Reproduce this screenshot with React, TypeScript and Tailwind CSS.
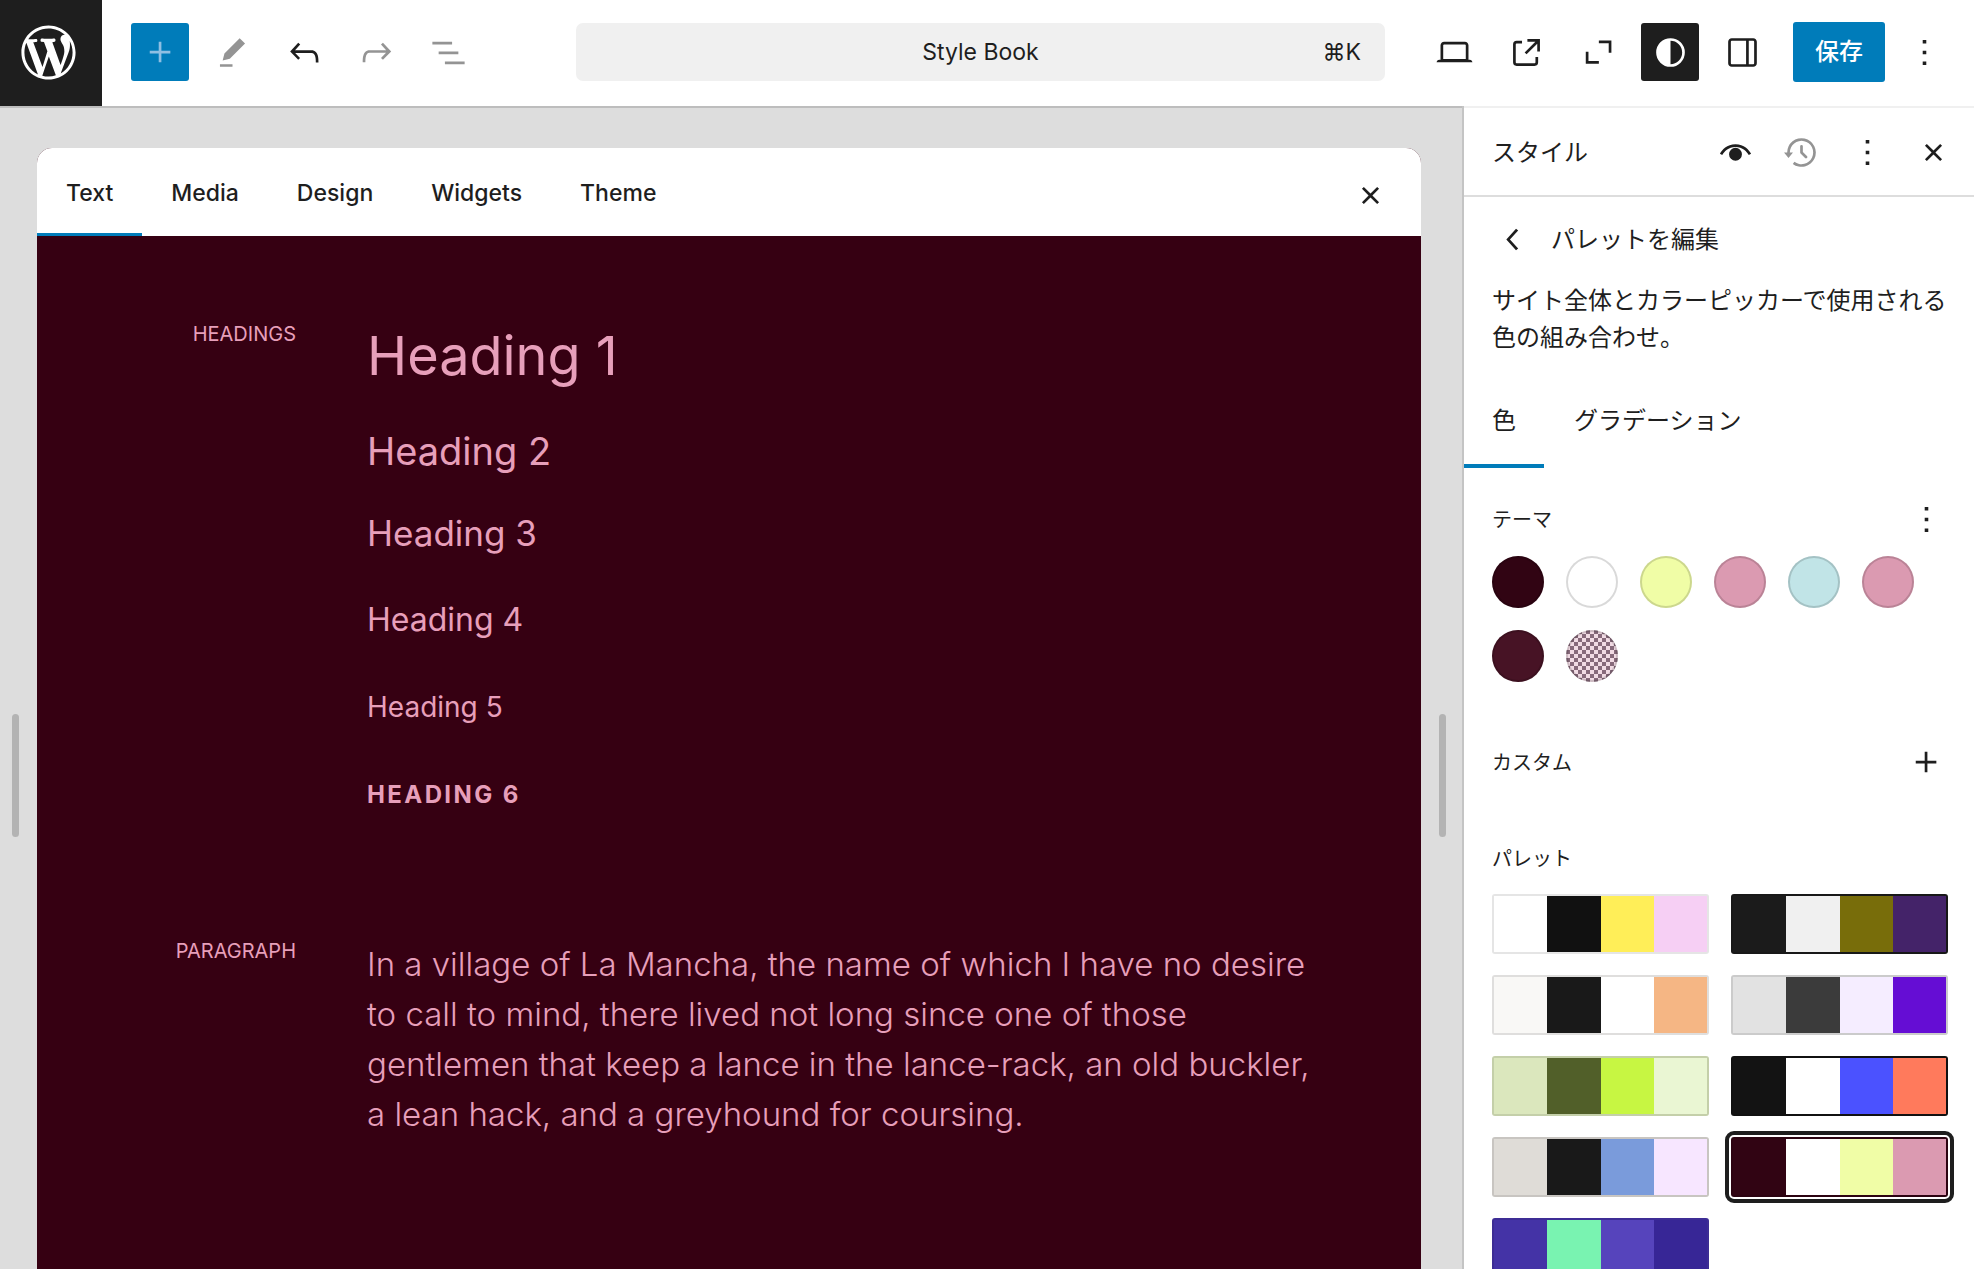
import type { ReactNode } from "react";

// 24x24 glyphs
const icons = {
  plus: "M11 12.5V17.5H12.5V12.5H17.5V11H12.5V6H11V11H6V12.5H11Z",
  edit: "m19 7-3-3-8.5 8.5-1 4 4-1L19 7Zm-7 11.5H5V20h7v-1.5Z",
  undo: "M18.3 11.7c-.6-.6-1.4-.9-2.3-.9H6.7l2.9-3.3-1.1-1-4.5 5L8.5 16l1-1-2.7-2.7H16c.5 0 .9.2 1.3.5 1 1 1 3.4 1 4.5v.3h1.5v-.2c0-1.5 0-4.3-1.5-5.7z",
  redo: "M15.6 6.5l-1.1 1 2.9 3.3H8c-.9 0-1.7.3-2.3.9-1.4 1.5-1.4 4.2-1.4 5.6v.2h1.5v-.3c0-1.1 0-3.5 1-4.5.3-.3.7-.5 1.3-.5h9.2L14.5 15l1.1 1.1 4.6-4.6-4.6-5z",
  list: "M3 6h11v1.5H3V6Zm3.5 5.5h11V13h-11v-1.5ZM21 17H10v1.5h11V17Z",
  laptop: "M20.5 16h-.7V8c0-1.1-.9-2-2-2H6.2c-1.1 0-2 .9-2 2v8h-.7c-.8 0-1.5.7-1.5 1.5h20c0-.8-.7-1.5-1.5-1.5zM5.7 8c0-.3.2-.5.5-.5h11.6c.3 0 .5.2.5.5v7.6H5.7V8z",
  external: "M19.5 4.5h-7V6h4.44l-5.97 5.97 1.06 1.06L18 7.06v4.44h1.5v-7Zm-13 1a2 2 0 0 0-2 2v10a2 2 0 0 0 2 2h10a2 2 0 0 0 2-2v-3H17v3a.5.5 0 0 1-.5.5h-10a.5.5 0 0 1-.5-.5v-10a.5.5 0 0 1 .5-.5h3V5.5h-3Z",
  expand: "M12.2 5.3h7v6.8h-1.5V6.8h-5.5V5.3ZM4.9 11.6h1.5v5.2h5.8v1.5H4.9v-6.7Z",
  styles: "M20 12a8 8 0 1 1-16 0 8 8 0 0 1 16 0Zm-1.5 0a6.5 6.5 0 0 1-6.5 6.5v-13a6.5 6.5 0 0 1 6.5 6.5Z",
  drawer: "M18 4H6c-1.1 0-2 .9-2 2v12c0 1.1.9 2 2 2h12c1.1 0 2-.9 2-2V6c0-1.1-.9-2-2-2zm-4 14.5H6c-.3 0-.5-.2-.5-.5V6c0-.3.2-.5.5-.5h8v13zm4.5-.5c0 .3-.2.5-.5.5h-2.5v-13H18c.3 0 .5.2.5.5v12z",
  more: "M13 19h-2v-2h2v2zm0-6h-2v-2h2v2zm0-6h-2V5h2v2z",
  eye: "M4.6 13.4C5.6 11.6 8 8.9 12 8.9s6.4 2.7 7.4 4.500l1.300-.7C19.6 10.600 16.800 7.400 12 7.400S4.400 10.600 3.300 12.700l1.300.7ZM12 16.600a3.600 3.600 0 1 0 0-7.200 3.600 3.600 0 0 0 0 7.200Z",
  history: "M5.5 12h1.75l-2.5 3-2.5-3H4a8 8 0 113.134 6.35l.907-1.194A6.5 6.5 0 105.5 12zm9.53 1.97l-2.28-2.28V8.5a.75.75 0 00-1.5 0V12a.747.747 0 00.218.529l2.502 2.502a.75.75 0 101.06-1.061z",
  close: "M12 13.06l3.712 3.713 1.061-1.06L13.061 12l3.712-3.712-1.06-1.06L12 10.938 8.288 7.227l-1.061 1.06L10.939 12l-3.712 3.712 1.06 1.061L12 13.061z",
  back: "M14.6 7l-1.2-1L8 12l5.4 6 1.2-1-4.6-5z",
};

function Icon({ name, className = "" }: { name: keyof typeof icons; className?: string }) {
  return (
    <svg
      viewBox="0 0 24 24"
      className={"size-[43px] shrink-0 fill-current " + className}
      aria-hidden="true"
    >
      <path
        d={icons[name]}
        fillRule={name === "eye" ? "nonzero" : "evenodd"}
      />
    </svg>
  );
}

function IconButton({
  name,
  label,
  className = "",
}: {
  name: keyof typeof icons;
  label: string;
  className?: string;
}) {
  return (
    <button
      type="button"
      aria-label={label}
      className={"flex size-[58px] shrink-0 items-center justify-center rounded-[3px] " + className}
    >
      <Icon name={name} />
    </button>
  );
}

function WordPressLogo() {
  return (
    <svg viewBox="-2 -2 24 24" className="size-[65px] fill-white" aria-hidden="true">
      <path d="M20 10c0-5.51-4.49-10-10-10C4.48 0 0 4.49 0 10c0 5.52 4.48 10 10 10 5.51 0 10-4.48 10-10zM7.78 15.37L4.37 6.22c.55-.02 1.17-.08 1.17-.08.5-.06.44-1.13-.06-1.11 0 0-1.45.11-2.37.11-.18 0-.37 0-.58-.01C4.12 2.69 6.87 1.11 10 1.11c2.33 0 4.45.87 6.05 2.34-.68-.11-1.65.39-1.65 1.58 0 .74.45 1.36.9 2.1.35.61.55 1.36.55 2.46 0 1.49-1.4 5-1.4 5l-3.03-8.37c.54-.02.82-.17.82-.17.5-.05.44-1.25-.06-1.22 0 0-1.44.12-2.38.12-.87 0-2.33-.12-2.33-.12-.5-.03-.56 1.2-.06 1.22l.92.08 1.26 3.41zM17.41 10c.24-.64.74-1.87.43-4.25.7 1.29 1.05 2.71 1.05 4.25 0 3.29-1.73 6.24-4.4 7.78.97-2.59 1.94-5.2 2.92-7.78zM6.1 18.09C3.12 16.65 1.11 13.53 1.11 10c0-1.3.23-2.48.72-3.59C3.25 10.3 4.67 14.2 6.1 18.09zm4.03-6.63l2.58 6.98c-.86.29-1.76.45-2.71.45-.79 0-1.57-.11-2.29-.33.81-2.38 1.62-4.74 2.42-7.1z" />
    </svg>
  );
}

const tabs = ["Text", "Media", "Design", "Widgets", "Theme"];

const themeColors = [
  { name: "Base", className: "bg-[#310413]" },
  { name: "Contrast", className: "bg-white" },
  { name: "Accent 1", className: "bg-[#f0fda6]" },
  { name: "Accent 2", className: "bg-[#db9ab1]" },
  { name: "Accent 3", className: "bg-[#c1e4e7]" },
  { name: "Accent 4", className: "bg-[#db9ab1]" },
  { name: "Accent 5", className: "bg-[#471325]" },
  {
    name: "Accent 6",
    className:
      "bg-[repeating-conic-gradient(#876a7b_0_25%,#f1dbe4_0_50%)] bg-[length:8px_8px]",
  },
];

const palettes = [
  ["#ffffff", "#111111", "#ffee58", "#f6cff4"],
  ["#1b1b1b", "#f0f0f0", "#786d0a", "#442369"],
  ["#f9f8f6", "#191919", "#ffffff", "#f5b684"],
  ["#e2e2e2", "#3b3b3b", "#f5edff", "#650dd4"],
  ["#dbe7bd", "#515f29", "#c7f642", "#eaf6d3"],
  ["#131313", "#ffffff", "#4b52ff", "#ff7a5c"],
  ["#dfdcd7", "#191919", "#7a9bdb", "#f7e6ff"],
  ["#310413", "#ffffff", "#f0fda6", "#db9ab1"],
  ["#4433a6", "#79f3b1", "#5644bc", "#372696"],
];
const activePalette = 7;

function Example({ title, children }: { title: string; children: ReactNode }) {
  return (
    <section className="grid grid-cols-[259px_minmax(0,1fr)] gap-[71px]">
      <h2 className="text-right text-[20px] leading-7 uppercase">{title}</h2>
      <div className="max-w-[960px] pt-0.5">{children}</div>
    </section>
  );
}

function TopBar() {
  return (
    <header className="flex h-[106px] shrink-0 items-center bg-white pr-[25px] pb-0.5">
      <a
        href="#"
        aria-label="WordPress"
        className="flex h-[106px] w-[102px] shrink-0 items-center justify-center self-start bg-[#1e1e1e] pr-1.5 pb-0.5"
      >
        <WordPressLogo />
      </a>
      <div className="ml-[29px] flex gap-3.5">
        <IconButton name="plus" label="Add block" className="bg-[#007cba] text-[#8fbfe3]" />
        <IconButton name="edit" label="Tools" className="text-[#949494]" />
        <IconButton name="undo" label="Undo" />
        <IconButton name="redo" label="Redo" className="text-[#949494]" />
        <IconButton name="list" label="List view" className="text-[#949494]" />
      </div>
      <button
        type="button"
        className="mr-10 ml-[99px] grid h-[58px] flex-1 grid-cols-[1fr_auto_1fr] items-center rounded-[7px] bg-[#f0f0f0] px-6 text-[23px]"
      >
        <span className="col-start-2">Style Book</span>
        <span className="text-right">⌘K</span>
      </button>
      <div className="flex items-center gap-3.5">
        <IconButton name="laptop" label="View" />
        <IconButton name="external" label="Open in new tab" />
        <IconButton name="expand" label="Zoom out" />
        <IconButton name="styles" label="Styles" className="bg-[#1e1e1e] text-white" />
        <IconButton name="drawer" label="Settings" />
        <button
          type="button"
          className="ml-2 h-[60px] w-[92px] rounded-[3px] bg-[#007cba] text-[24px] font-medium text-white"
        >
          保存
        </button>
        <button type="button" aria-label="Options" className="flex h-[58px] w-[50px] items-center justify-center">
          <Icon name="more" />
        </button>
      </div>
    </header>
  );
}

function StyleBook() {
  return (
    <main className="flex min-w-0 flex-1 justify-between border-t-2 border-[#bdbdbd] bg-[#ddd] pt-10 pr-4 pl-3">
      <div className="mt-[566px] h-[123px] w-[7px] shrink-0 rounded-full bg-[#b3b3b3]" />
      <div className="mx-[18px] flex min-w-0 flex-1 flex-col overflow-hidden rounded-t-[15px] bg-[#360012]">
        <div className="flex h-[88px] shrink-0 items-center justify-between bg-white pr-[22px]">
          <div role="tablist" className="flex h-full">
            {tabs.map((tab, index) => (
              <button
                key={tab}
                type="button"
                role="tab"
                aria-selected={index === 0}
                className={
                  "border-y-[3px] border-t-transparent px-[29px] pt-0.5 text-[23px] font-medium " +
                  (index === 0 ? "border-b-[#007cba]" : "border-b-transparent")
                }
              >
                {tab}
              </button>
            ))}
          </div>
          <IconButton name="close" label="Close" className="mt-1.5" />
        </div>

        <div className="flex flex-col gap-[117px] pt-[84px] text-[#e79fba]">
          <Example title="Headings">
            <h1 className="text-[54px] leading-[68px]">Heading 1</h1>
            <h2 className="mt-9 text-[38px] leading-[50px]">Heading 2</h2>
            <h3 className="mt-8 text-[35px] leading-[50px]">Heading 3</h3>
            <h4 className="mt-[37px] text-[32px] leading-[50px]">Heading 4</h4>
            <h5 className="mt-[37px] text-[28px] leading-[50px]">Heading 5</h5>
            <h6 className="mt-[38px] text-[24px] leading-[50px] font-bold tracking-widest uppercase">
              Heading 6
            </h6>
          </Example>
          <Example title="Paragraph">
            <p className="text-[33px] leading-[50px] font-light">
              In a village of La Mancha, the name of which I have no desire to
              call to mind, there lived not long since one of those gentlemen
              that keep a lance in the lance-rack, an old buckler, a lean hack,
              and a greyhound for coursing.
            </p>
          </Example>
        </div>
      </div>
      <div className="mt-[566px] h-[123px] w-[7px] shrink-0 rounded-full bg-[#b3b3b3]" />
    </main>
  );
}

function Sidebar() {
  return (
    <aside className="w-[512px] shrink-0 border-l-2 border-[#c4c4c4] bg-white">
      <div className="flex h-[91px] items-center border-t-2 border-b-2 border-t-[#f0f0f0] border-b-[#ddd] pt-0.5 pr-3 pl-7">
        <h2 className="flex-1 text-[24px]">スタイル</h2>
        <div className="flex gap-2">
          <IconButton name="eye" label="スタイルブック" />
          <IconButton name="history" label="リビジョン" className="text-[#949494]" />
          <IconButton name="more" label="その他" />
          <IconButton name="close" label="閉じる" />
        </div>
      </div>

      <div className="flex h-[85px] items-center gap-4 pl-7">
        <button type="button" aria-label="戻る" className="flex h-[43px] items-center">
          <Icon name="back" />
        </button>
        <h3 className="text-[24px]">パレットを編集</h3>
      </div>
      <p className="pr-6 pl-7 text-[24px] leading-[37px]">
        サイト全体とカラーピッカーで使用される色の組み合わせ。
      </p>

      <div role="tablist" className="mt-[18px] flex h-[94px] gap-0.5 text-[24px]">
        <button
          type="button"
          role="tab"
          aria-selected="true"
          className="border-y-4 border-t-transparent border-b-[#007cba] px-7"
        >
          色
        </button>
        <button type="button" role="tab" aria-selected="false" className="px-7">
          グラデーション
        </button>
      </div>

      <div className="mt-[30px] flex items-center justify-between pr-[26px] pl-7">
        <h4 className="text-[20px]">テーマ</h4>
        <button type="button" aria-label="カラーオプション">
          <Icon name="more" />
        </button>
      </div>
      <div className="mt-[15px] flex flex-wrap gap-[22px] pr-[26px] pl-7">
        {themeColors.map((color) => (
          <button
            key={color.name}
            type="button"
            aria-label={color.name}
            className={"size-[52px] rounded-full inset-ring-2 inset-ring-black/15 " + color.className}
          />
        ))}
      </div>

      <div className="mt-[59px] flex items-center justify-between pr-[26px] pl-7">
        <h4 className="text-[20px]">カスタム</h4>
        <button type="button" aria-label="色を追加">
          <Icon name="plus" />
        </button>
      </div>

      <h4 className="mt-[60px] pl-7 text-[20px] leading-[30px]">パレット</h4>
      <div className="mt-5 grid grid-cols-2 gap-x-[22px] gap-y-[21px] pr-[26px] pl-7">
        {palettes.map((colors, index) => (
          <button
            key={colors.join()}
            type="button"
            aria-label={"パレット " + (index + 1)}
            aria-pressed={index === activePalette}
            className={
              "flex h-[60px] rounded-[3px] border-2 border-black/10 " +
              (index === activePalette ? "outline-4 outline-offset-2 outline-[#1e1e1e]" : "")
            }
            style={{ backgroundColor: colors[0] }}
          >
            {colors.map((color) => (
              <span key={color} className="h-full flex-1" style={{ backgroundColor: color }} />
            ))}
          </button>
        ))}
      </div>
    </aside>
  );
}

export default function App() {
  return (
    <div className="flex h-screen flex-col overflow-hidden bg-white font-['Inter','Noto_Sans_CJK_JP',sans-serif] text-[#1e1e1e]">
      <TopBar />
      <div className="flex min-h-0 flex-1">
        <StyleBook />
        <Sidebar />
      </div>
    </div>
  );
}
